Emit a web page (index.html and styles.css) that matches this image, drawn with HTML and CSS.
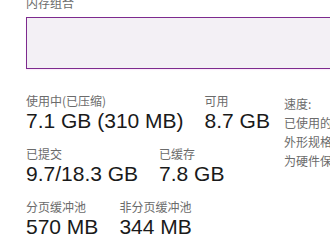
FILE: index.html
```html
<!DOCTYPE html>
<html lang="zh-CN">
  <head>
    <meta charset="UTF-8" />
    <meta name="viewport" content="width=device-width, initial-scale=1.0" />
    <title>内存</title>
    <link rel="stylesheet" href="styles.css">
  </head>
  <body>
    <main class="memory-panel">
      <section class="composition">
        <span class="stat-label">内存组合</span>
        <div class="composition-bar"></div>
      </section>

      <section class="details">
        <div class="stats">
          <div class="stat-row">
            <div class="stat">
              <span class="stat-label">使用中(已压缩)</span>
              <span class="stat-value">7.1 GB (310 MB)</span>
            </div>
            <div class="stat">
              <span class="stat-label">可用</span>
              <span class="stat-value">8.7 GB</span>
            </div>
          </div>
          <div class="stat-row">
            <div class="stat">
              <span class="stat-label">已提交</span>
              <span class="stat-value">9.7/18.3 GB</span>
            </div>
            <div class="stat">
              <span class="stat-label">已缓存</span>
              <span class="stat-value">7.8 GB</span>
            </div>
          </div>
          <div class="stat-row">
            <div class="stat">
              <span class="stat-label">分页缓冲池</span>
              <span class="stat-value">570 MB</span>
            </div>
            <div class="stat">
              <span class="stat-label">非分页缓冲池</span>
              <span class="stat-value">344 MB</span>
            </div>
          </div>
        </div>

        <ul class="specs">
          <li>速度:</li>
          <li>已使用的插槽:</li>
          <li>外形规格:</li>
          <li>为硬件保留的内存:</li>
        </ul>
      </section>
    </main>
  </body>
</html>
```

FILE: styles.css
```css
:root {
  --label-color: #6b6b6b;
  --value-color: #1a1a1a;
  --bar-border: #7d2a8e;
  --bar-fill: #f3f0f5;
}

*,
*::before,
*::after {
  box-sizing: border-box;
  margin: 0;
  padding: 0;
}

body {
  font-family: "Liberation Sans", "Noto Sans CJK SC", sans-serif;
  background-color: #ffffff;
  overflow: hidden;
  width: 330px;
  height: 250px;
}

.memory-panel {
  display: flex;
  flex-direction: column;
  gap: 24px;
  padding-left: 26px;
  margin-top: -5px;
}

.composition {
  display: flex;
  flex-direction: column;
  gap: 6px;
}

.composition-bar {
  width: 330px;
  height: 52px;
  background-color: var(--bar-fill);
  border: 1px solid var(--bar-border);
  box-shadow: 0 1px 1px #fbeefb;
}

.details {
  display: grid;
  grid-template-columns: 258px 1fr;
}

.stats {
  display: flex;
  flex-direction: column;
  gap: 13px;
}

.stat-row {
  display: flex;
  gap: 21px;
}

.stat {
  display: flex;
  flex-direction: column;
  white-space: nowrap;
}

.stat-label {
  font-family: "Noto Sans CJK SC", sans-serif;
  font-size: 12px;
  line-height: 16px;
  color: var(--label-color);
  white-space: nowrap;
}

.stat-value {
  font-size: 21px;
  line-height: 24px;
  color: var(--value-color);
}

.specs {
  list-style: none;
  font-family: "Noto Sans CJK SC", sans-serif;
  font-size: 12px;
  line-height: 19px;
  padding-top: 1px;
  color: var(--label-color);
  white-space: nowrap;
  overflow: hidden;
}
```
